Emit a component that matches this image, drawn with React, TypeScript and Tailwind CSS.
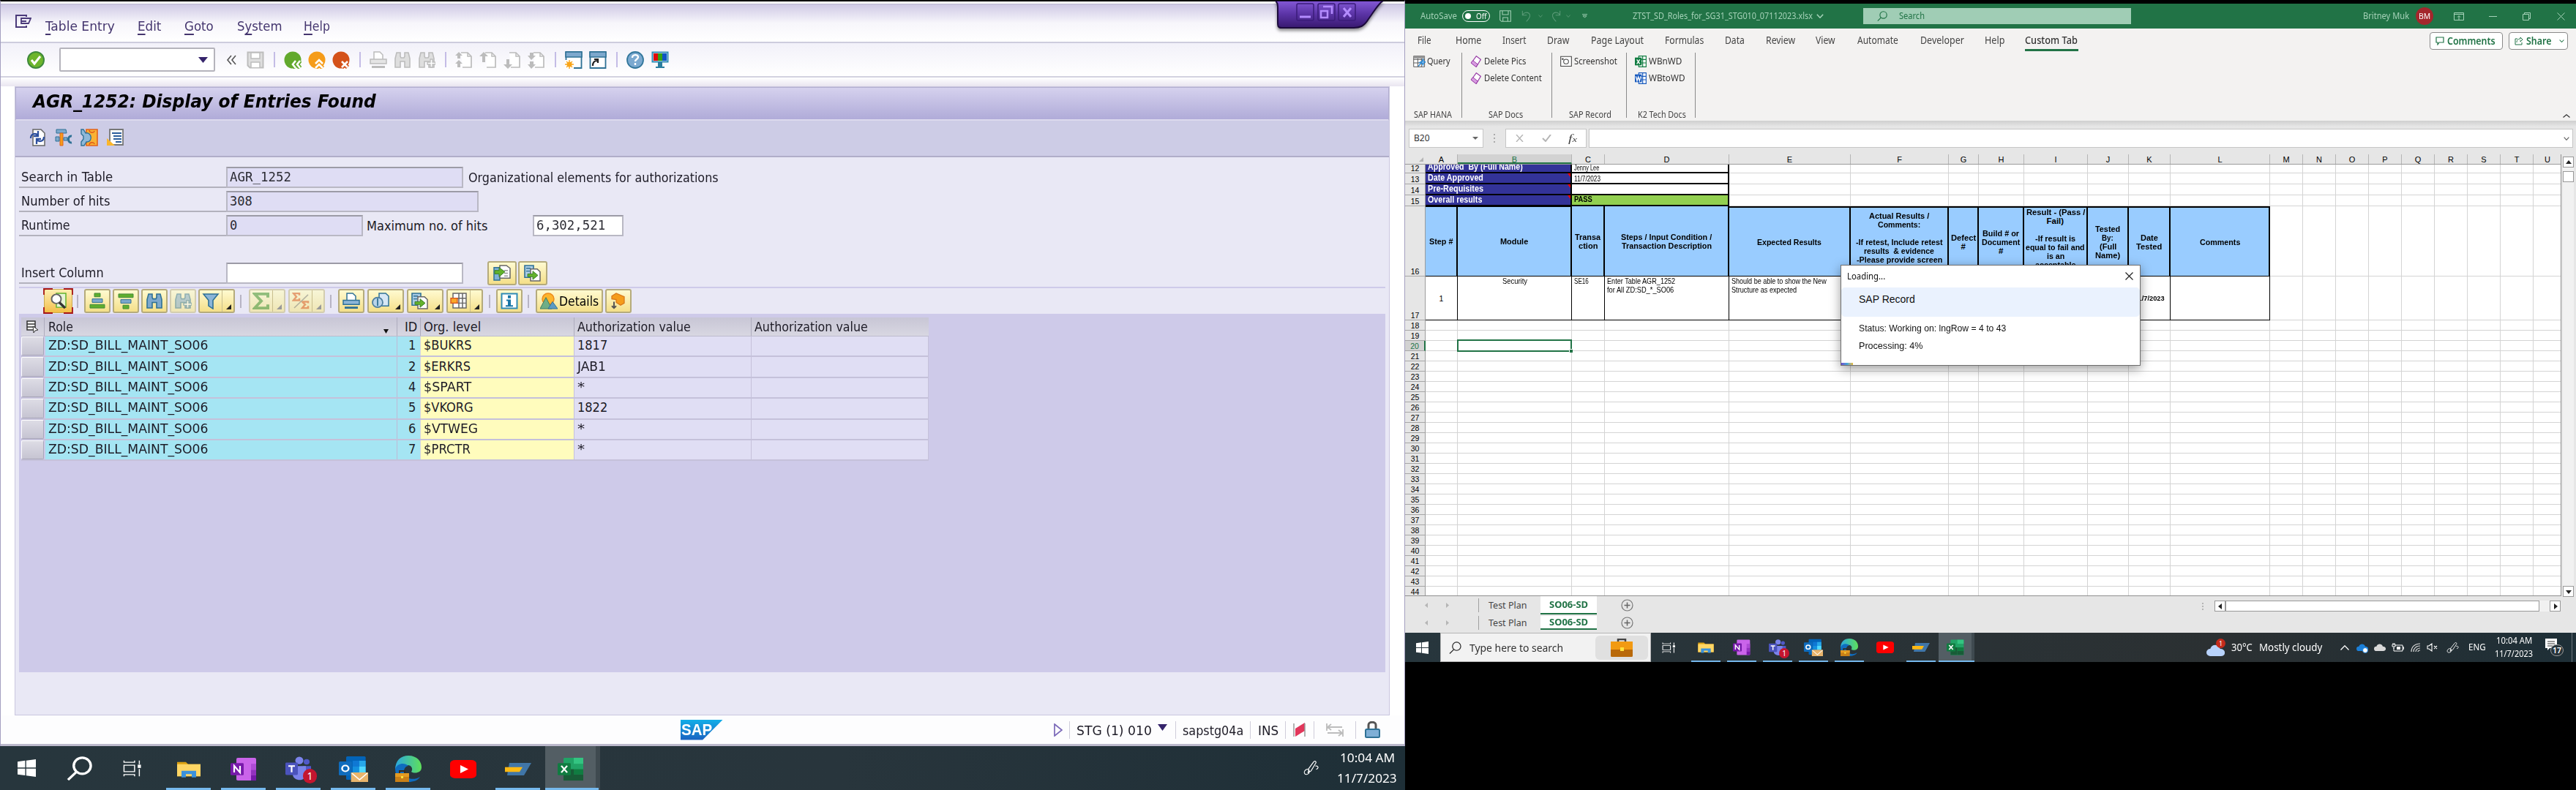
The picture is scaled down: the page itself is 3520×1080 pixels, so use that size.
import React, { useLayoutEffect, useRef } from "react";

/* Text fitted horizontally to the width of its own box. */
function T({ className = "", children }: { className?: string; children: React.ReactNode }) {
  const outer = useRef<HTMLSpanElement>(null);
  const inner = useRef<HTMLSpanElement>(null);
  useLayoutEffect(() => {
    const fit = () => {
      if (!outer.current || !inner.current) return;
      const natural = inner.current.offsetWidth;
      if (natural) inner.current.style.transform = `scaleX(${outer.current.offsetWidth / natural})`;
    };
    fit();
    document.fonts?.ready.then(fit);
  }, []);
  return (
    <span ref={outer} className={"block shrink-0 whitespace-pre " + className}>
      <span ref={inner} className="inline-block origin-left">{children}</span>
    </span>
  );
}

type IP = { className?: string };
const U = ({ children }: { children: React.ReactNode }) => <span className="underline underline-offset-4 decoration-[1.5px]">{children}</span>;

/* ---------- SAP toolbar icons ---------- */
const S = ({ className = "", children, vb = "0 0 24 24" }: IP & { children: React.ReactNode; vb?: string }) => (
  <svg viewBox={vb} preserveAspectRatio="none" fill="none" className={"block shrink-0 " + className}>{children}</svg>
);
const Sep = () => <div className="mx-[12.5px] h-[21px] w-[2px] shrink-0 bg-[#c4bce6]" />;
const I6 = "h-6 w-6";
const Ok = () => <S className={I6}><circle cx="12" cy="12" r="11" fill="#6db52c" stroke="#3f8a3c" strokeWidth="2" /><path d="M6 12l4 5 8-10" stroke="#fff" strokeWidth="3" /></S>;
const Save = () => <S className={I6}><path d="M1.500 1.500h21v21h-18l-3-3z" stroke="#bdbdbd" strokeWidth="2" fill="#dedede" /><path d="M6 2h12v8H6z" fill="#fff" stroke="#bdbdbd" strokeWidth="1.500" /><path d="M6 22v-7h12v7" fill="#fff" stroke="#bdbdbd" strokeWidth="1.500" /></S>;
const Round = ({ fill, d }: { fill: string; d: string }) => (
  <S className={I6}><circle cx="12" cy="12" r="11.500" fill={fill} /><path d={d} stroke={fill} strokeWidth="6" /><path d={d} stroke="#fff" strokeWidth="2.600" /></S>
);
const G = "#bcbcbc";
const Printer = ({ c = G, f = "#e4e4e4", className = I6 }: IP & { c?: string; f?: string }) => (
  <S className={className}><path d="M6 11V1h8l4 4v6" fill="#fff" stroke={c} strokeWidth="1.500" /><path d="M1 11h22v6H1z" fill={f} stroke={c} strokeWidth="1.500" /><path d="M3 20h18v3H3z" fill={c} /></S>
);
const Bino = ({ c = G, f = "#dedede", plus = false, className = I6 }: IP & { c?: string; f?: string; plus?: boolean }) => (
  <S className={className}><path d="M4 2h5v5l1 2h4l1-2V2h5l2 8v12h-7v-8h-6v8H2V10z" fill={f} stroke={c} strokeWidth="1.600" />{plus && <path d="M17 11h3v4h4v3h-4v4h-3v-4h-4v-3h4z" fill="#fff" stroke={c} strokeWidth="1.300" />}</S>
);
const Page = ({ d }: { d: string }) => (
  <S className={I6}><path d="M8 2h9l5 5v15H10" stroke={G} strokeWidth="1.700" fill="#fff" /><path d="M17 2v5h5" stroke={G} strokeWidth="1.500" /><path d={d} fill={G} /></S>
);
const WinIcon = ({ kind }: { kind: number }) => (
  <S className={I6}><path d="M1.500 1h21v22h-21z" fill="#fff" stroke="#2f7195" strokeWidth="1.800" /><path d="M1 1h22v7H1z" fill="#7da8cd" stroke="#2f7195" strokeWidth="1.600" />
    {kind === 0 ? <><path d="M0 12h12v12H0z" fill="#fff" /><circle cx="6" cy="18" r="3.500" fill="#f9a51a" /><path d="M6 12v12M0 18h12M2 14l8 8M10 14l-8 8" stroke="#f9a51a" strokeWidth="1.400" /></> : <path d="M5 20c0-5 2-7 6-7M7 11h5v5" stroke="#222" strokeWidth="2.200" />}</S>
);
const Help = () => <S className={I6}><circle cx="12" cy="12" r="11" fill="#7ba9d0" stroke="#33779c" strokeWidth="1.800" /><path d="M8 9c0-5 8-5 8-1 0 3-4 3-4 6M12 16v3" stroke="#fff" strokeWidth="2.400" /></S>;
const Monitor = () => <S className={I6}><path d="M1.500 1.500h21v13h-21z" fill="#fff" stroke="#2f8bb5" strokeWidth="2" /><path d="M3 3h6v10H3z" fill="#e10a0a" /><path d="M9 3h6v10H9z" fill="#35a412" /><path d="M15 3h6v10h-6z" fill="#1054c4" /><path d="M9 15h6v6h3v2H6v-2h3z" fill="#2b7d9f" /></S>;

/* ---------- yellow ALV buttons ---------- */
function YB({ className = "", children, dim = false, corner = false, split = false }: IP & { children?: React.ReactNode; dim?: boolean; corner?: boolean; split?: boolean }) {
  return (
    <div className={"relative flex h-[33px] shrink-0 items-center rounded-[3px] border-2 bg-gradient-to-b " + (dim ? "border-[#d3cdb0] from-[#f7f5d6] to-[#efe6b4] " : "border-[#b5ab7c] from-[#fffad0] to-[#f4df88] ") + className}>
      <div className={dim ? "flex flex-1 items-center justify-center opacity-50" : "flex flex-1 items-center justify-center"}>{children}</div>
      {split && <div className="h-full w-px shrink-0 bg-[#c9bf8e]" />}
      {(corner || split) && (
        <div className="flex h-full w-[15px] shrink-0 items-end justify-end p-[3px]">
          <svg viewBox="0 0 8 8" className="h-[7px] w-[7px]"><path d="M8 0v8H0z" fill={dim ? "#999" : "#222"} /></svg>
        </div>
      )}
    </div>
  );
}
const YSep = ({ className = "" }: IP) => <div className={"h-[18px] w-[2px] shrink-0 bg-[#b7b4c4] " + className} />;
const B6 = "h-[23px] w-[24px]";
const Bars = ({ up }: { up: boolean }) => (
  <S className={B6}>{up
    ? <><path d="M8 1h8v5H8z" fill="#5fae2c" stroke="#3f8a3c" /><path d="M5 9h14v5H5z" fill="#7da8cd" stroke="#2f7195" /><path d="M2 17h20v5H2z" fill="#5fae2c" stroke="#3f8a3c" /></>
    : <><path d="M2 2h20v5H2z" fill="#5fae2c" stroke="#3f8a3c" /><path d="M5 10h14v5H5z" fill="#7da8cd" stroke="#2f7195" /><path d="M8 18h8v5H8z" fill="#5fae2c" stroke="#3f8a3c" /></>}</S>
);
const Arrow = ({ flip = false }: { flip?: boolean }) => (
  <S className={B6}>{flip
    ? <><path d="M1 1h12v17H1z" fill="#a9cbe4" stroke="#2f7195" strokeWidth="1.600" /><path d="M3 5h6M3 9h5" stroke="#2f7195" strokeWidth="1.500" /><path d="M9 6h9l4 4v13H9z" fill="#fff" stroke="#666" strokeWidth="1.500" /><path d="M5 13h7V9l7 6-7 6v-4H5z" fill="#63b22b" stroke="#3c7f2c" /></>
    : <><path d="M1 4h8v18H1z" fill="#7fb2d6" stroke="#2f7195" strokeWidth="1.500" /><path d="M9 1h9l5 4v14H9z" fill="#fff" stroke="#666" strokeWidth="1.500" /><path d="M15 8h5M15 12h5M15 16h5" stroke="#999" strokeWidth="1.500" /><path d="M2 8h6V4l8 6-8 7v-4H2z" fill="#63b22b" stroke="#3c7f2c" /></>}</S>
);

/* ---------- Windows taskbar icons ---------- */
const V = ({ className = "", children }: IP & { children: React.ReactNode }) => <S vb="0 0 36 36" className={className}>{children}</S>;
const Win = ({ className }: IP) => <V className={className}><path d="M0 5l15-2.200V17H0zM17 2.500L36 0v17H17zM0 19h15v14L0 31zM17 19h19v17l-19-2.600z" fill="#fff" /></V>;
const Mag = ({ className, c = "#fff", w = 3.500 }: IP & { c?: string; w?: number }) => <V className={className}><circle cx="22" cy="14" r="12" stroke={c} strokeWidth={w} /><path d="M14 23L2 35" stroke={c} strokeWidth={w} /></V>;
const TaskView = ({ className }: IP) => <V className={className}><path d="M2 1v4h20V1M2 11h20v14H2zM2 35v-4h20v4M31 1v8M31 19v16" stroke="#fff" strokeWidth="2" /><path d="M28 10h6v7h-6z" fill="#fff" /></V>;
const Folder = ({ className }: IP) => <V className={className}><path d="M2 5h12l3 4h17v22H2z" fill="#dda211" /><path d="M2 9h32v22H2z" fill="#ffd664" /><path d="M8 33V21h20v12h-6v-6h-8v6z" fill="#3b92dc" /></V>;
const OneNote = ({ className }: IP) => <V className={className}><rect x="8" y="1" width="27" height="34" rx="2" fill="#ca64ea" /><path d="M28 10h7v9h-7z" fill="#ae4bd5" /><path d="M28 19h7v8h-7z" fill="#9332bf" /><path d="M28 27h7v8h-7z" fill="#7719aa" /><rect y="9" width="18" height="18" rx="1.500" fill="#7719aa" /><path d="M5 23V13l8 10V13" stroke="#fff" strokeWidth="2.200" /></V>;
const Teams = ({ className }: IP) => <V className={className}><circle cx="19" cy="6" r="5.500" fill="#7b83eb" /><circle cx="29" cy="8" r="4" fill="#5059c9" /><path d="M24 14h11v10c0 6-8 7-11 3z" fill="#5059c9" /><path d="M10 14h18v12c0 12-18 10-18 0z" fill="#7b83eb" /><rect y="9" width="17" height="18" rx="1.500" fill="#4b53bc" /><path d="M4 14h9M8.500 14v9" stroke="#fff" strokeWidth="2.200" /></V>;
const Outlook = ({ className }: IP) => <V className={className}><rect x="9" y="1" width="24" height="32" rx="1.500" fill="#0364b8" /><path d="M17 7h8v8h-8z" fill="#0f78d4" /><path d="M25 7h8v8h-8z" fill="#28a8ea" /><path d="M17 15h8v8h-8z" fill="#1490df" /><path d="M25 15h8v8h-8z" fill="#50d9ff" /><rect y="8" width="16" height="19" rx="1.500" fill="#0f6cbd" /><circle cx="8" cy="17.500" r="4" stroke="#fff" strokeWidth="2.200" /><path d="M15 23h21v13H15z" fill="#e8b46c" /><path d="M16 24l9.500 9L35 24" stroke="#fff" strokeWidth="1.500" /></V>;
const Edge = ({ className }: IP) => (
  <V className={className}>
    <defs><linearGradient id="eg" x1="0" x2="1"><stop stopColor="#2aa7e0" /><stop offset="1" stopColor="#5fe05a" /></linearGradient></defs>
    <path d="M0 20C0 6 8 0 18 0c12 0 18 8 18 16 0 8-10 9-14 6 3-4 0-9-5-9C9 13 0 16 0 20z" fill="url(#eg)" />
    <path d="M0 18c3-8 13-9 18-4-6 1-7 7-5 12 3 6 13 8 21 3-3 5-9 7-16 7C7 36 0 28 0 18z" fill="#0f6cbf" />
    <path d="M0 24h19v12H0z" fill="#c87f17" /><path d="M0 24h19v5H0z" fill="#e39a22" /><path d="M6 24v-3h7v3" stroke="#3a2a18" strokeWidth="2" /><path d="M8 28h3v3H8z" fill="#ffe13b" />
  </V>
);
const YouTube = ({ className }: IP) => <V className={className}><rect y="0" width="36" height="36" rx="7" fill="#f00" /><path d="M14 10l11 8-11 8z" fill="#fff" /></V>;
const SapGui = ({ className }: IP) => <V className={className}><path d="M6 0h30L26 36H3z" fill="#4076a8" /><path d="M0 12h24l-4 14H0z" fill="#fdb913" /></V>;
const Excel = ({ className }: IP) => <V className={className}><rect x="8" y="1" width="27" height="34" rx="1.500" fill="#21a366" /><path d="M22 1h13v9H22z" fill="#33c481" /><path d="M8 18h14v17H8z" fill="#185c37" /><path d="M22 18h13v8H22z" fill="#107c41" /><path d="M22 26h13v9H22z" fill="#185c37" /><rect y="9" width="18" height="18" rx="1.500" fill="#107c41" /><path d="M5 13l8 10M13 13L5 23" stroke="#fff" strokeWidth="2.300" /></V>;
const Pen = ({ className }: IP) => <V className={className}><path d="M14 30C4 40-2 28 6 22c5-3 8 0 8 4 0 3-3 4-4 2M12 20L24 3c2-4 7-1 5 3L18 25l-6 4zM28 13c7-1 9 5 2 8" stroke="#fff" strokeWidth="2" /></V>;

const icons = [Folder, OneNote, Teams, Outlook, Edge, YouTube, SapGui, Excel];

/* ---------- SAP window ---------- */
const tableRows: [string, string, string][] = [
  ["1", "$BUKRS", "1817"], ["2", "$ERKRS", "JAB1"], ["4", "$SPART", "*"],
  ["5", "$VKORG", "1822"], ["6", "$VTWEG", "*"], ["7", "$PRCTR", "*"],
];
const orgW = ["w-[65px]", "w-[64px]", "w-[65px]", "w-[68px]", "w-[74px]", "w-[64px]"];
const valW = ["w-[41px]", "w-[39px]", "w-[10px]", "w-[41px]", "w-[10px]", "w-[10px]"];

const Field = ({ className = "", children, white = false }: IP & { children?: React.ReactNode; white?: boolean }) => (
  <div className={"flex h-[29px] shrink-0 items-center border-2 border-[#b9b8c4] border-t-[#9c9ba6] pl-[3px] font-['DejaVu_Sans_Mono',monospace] text-[17px] leading-none text-[#2b2b33] " + (white ? "bg-white " : "bg-[#dfddf4] ") + className}>{children}</div>
);
const Label = ({ children }: { children: React.ReactNode }) => <div className="flex h-[29px] w-[283px] shrink-0 items-center border-b-2 border-[#b3b2bd] pl-[3px]">{children}</div>;

function SapWindow() {
  return (
    <div className="relative flex h-[1020px] w-[1920px] flex-col border-x border-t-2 border-x-[#a49fc0] border-t-black bg-white font-['DejaVu_Sans_Condensed','DejaVu_Sans',sans-serif] text-[18px] leading-[20px] text-[#1d1b26]">
      {/* menu */}
      <div className="mt-[3px] flex h-[52px] items-center border-t border-[#bcb8d0] bg-gradient-to-b from-[#cfc9e5] via-[#f7f6fb] to-white pl-5 text-[#44356e]">
        <S className="-mt-[6px] h-[18px] w-[22px]" vb="0 0 22 18"><path d="M15 3V1H1v16h14v-2" stroke="#4b3a7a" strokeWidth="2" /><path d="M8 5h13l-3 7H8zM8 9h7" stroke="#4b3a7a" strokeWidth="1.800" /></S>
        <T className="ml-[19px] w-[95px] pt-2"><U>T</U>able Entry</T>
        <T className="ml-[31px] w-[32px] pt-2"><U>E</U>dit</T>
        <T className="ml-[32px] w-[40px] pt-2"><U>G</U>oto</T>
        <T className="ml-[32px] w-[61px] pt-2">S<U>y</U>stem</T>
        <T className="ml-[30px] w-[36px] pt-2"><U>H</U>elp</T>
      </div>
      {/* standard toolbar */}
      <div className="flex h-[47px] items-center border-t-2 border-[#cdccdd] bg-gradient-to-b from-[#f2f1f9] to-white pl-9">
        <Ok />
        <div className="ml-5 flex h-[33px] w-[213px] shrink-0 items-center justify-end rounded-[2px] border-2 border-[#b5b4bc] bg-white pr-2">
          <S className="h-2 w-[13px]" vb="0 0 12 8"><path d="M0 0h12L6 8z" fill="#35246b" /></S>
        </div>
        <S className="ml-[15px] h-[14px] w-[14px]" vb="0 0 14 14"><path d="M7 1L2 7l5 6M13 1L8 7l5 6" stroke="#555" strokeWidth="1.600" /></S>
        <div className="w-[14px] shrink-0" />
        <Save /><Sep />
        <div className="flex gap-[9px]">
          <Round fill="#62a92d" d="M16 13l-4 5 4 5M22 13l-4 5 4 5" />
          <Round fill="#f59c1a" d="M10 17l5-5 5 5M10 23l5-5 5 5" />
          <Round fill="#d4521a" d="M13 14l8 8M21 14l-8 8" />
        </div><Sep />
        <div className="flex gap-[9px]"><Printer /><Bino /><Bino plus /></div><Sep />
        <div className="flex gap-[9px]">
          <Page d="M5 1l5 5H7v4H3V6H0zM5 12l5 5H7v5H3v-5H0z" />
          <Page d="M6 1l6 6H8v8H4V7H0z" />
          <Page d="M6 24l6-6H8v-7H4v7H0z" />
          <Page d="M5 24l6-6H8v-4H3v4H0zM5 12l6-6H8V2H3v4H0z" />
        </div><Sep />
        <div className="flex gap-[9px]"><WinIcon kind={0} /><WinIcon kind={1} /></div><Sep />
        <div className="flex gap-[10px]"><Help /><Monitor /></div>
      </div>
      <div className="h-[14px] shrink-0 border-t-2 border-[#d3d2e0] bg-gradient-to-b from-white to-[#e9e5f0]" />
      {/* content panel */}
      <div className="ml-[19px] mr-[20px] flex h-[860px] flex-col border border-[#c9c6de] bg-[#e9e8f5]">
        <div className="flex h-[46px] shrink-0 items-center border border-b-2 border-[#b2aed0] border-b-[#dcd9ee] bg-gradient-to-b from-[#d5d1ee] to-[#b0abd8] pl-[23px] text-[24px] font-bold italic leading-[30px] text-black">
          <T className="-mt-[5px] w-[469px]">AGR_1252: Display of Entries Found</T>
        </div>
        <div className="flex h-[50px] shrink-0 items-center border-b-2 border-[#b0adc9] bg-[#cdcce6] pl-[18px]">
          <S className="-mt-[2px] h-6 w-6"><path d="M6 1h11l5 5v17H6z" fill="#fff" stroke="#666" strokeWidth="1.500" /><path d="M3 13c0-6 6-8 10-4M13 3v7H7M21 11c0 6-6 8-10 4M11 21v-7h6" stroke="#2c4f9e" strokeWidth="2.300" /></S>
          <S className="-mt-[2px] ml-3 h-6 w-6"><path d="M2 1h13l1 5H2z" fill="#7da8cd" stroke="#2f7195" /><path d="M7 6h4v17H7z" fill="#f59c1a" stroke="#e2621b" /><path d="M1 11h5v6H1zM12 12h5v4h-5z" fill="#7da8cd" stroke="#2f7195" /><path d="M23 10c-6-1-6 10 0 9" stroke="#2f7195" strokeWidth="3" /></S>
          <S className="-mt-[2px] ml-[11px] h-6 w-6"><path d="M8 1h15v22H8z" fill="#f9b233" stroke="#e2621b" strokeWidth="1.600" /><path d="M1 1h3l3 5c9-2 10 13 1 12l-3 5H1v-5l3-4v-4L1 7z" fill="#8fb8d8" stroke="#2f7195" strokeWidth="1.400" /><path d="M12 2c0 4 7 4 7 1M12 22c0-4 7-4 7-1" stroke="#e2621b" strokeWidth="1.600" /></S>
          <S className="-mt-[2px] ml-3 h-6 w-6"><path d="M4 1h18v21H4z" fill="#fff" stroke="#777" strokeWidth="1.800" /><path d="M7 6h13M9 10h11M9 14h11M12 18h8" stroke="#2b5d9c" strokeWidth="1.800" /><path d="M0 13l11 10H0z" fill="#fbb62b" /></S>
        </div>
        <div className="flex flex-col gap-1 pl-[5px] pt-[13px]">
          <div className="flex items-center"><Label><T className="w-[125px]">Search in Table</T></Label><Field className="w-[324px]"><T className="w-[84px]">AGR_1252</T></Field><T className="ml-[7px] w-[342px]">Organizational elements for authorizations</T></div>
          <div className="flex items-center"><Label><T className="w-[122px]">Number of hits</T></Label><Field className="w-[345px]"><T className="w-[31px]">308</T></Field></div>
          <div className="flex items-center"><Label><T className="w-[67px]">Runtime</T></Label><Field className="w-[187px]"><T className="w-[10px]">0</T></Field><T className="ml-[5px] w-[165px]">Maximum no. of hits</T><Field white className="ml-[62px] w-[124px]"><T className="w-[94px]">6,302,521</T></Field></div>
        </div>
        <div className="mt-[34px] flex h-[33px] items-center pl-[5px]">
          <Label><T className="w-[113px]">Insert Column</T></Label><Field white className="w-[324px]" />
          <YB className="ml-[33px] w-[40px]"><Arrow /></YB><YB className="ml-[2px] w-[40px]"><Arrow flip /></YB>
        </div>
        {/* result grid */}
        <div className="mx-[5px] mt-[2px] flex h-[527px] shrink-0 flex-col bg-[#cecae9]">
          <div className="mt-[2px] flex h-[35px] shrink-0 items-center bg-[#e9e8f5] pl-[34px]">
            <div className="relative flex h-[33px] w-[39px] shrink-0 items-center justify-center rounded-[3px] border border-[#c9a94c] bg-gradient-to-b from-[#fdeeb0] to-[#f3bf45]">
              <S className={B6}><path d="M9 1h13v20H9z" fill="#e7f3d5" stroke="#63b22b" strokeWidth="1.500" /><circle cx="9" cy="9" r="6.500" fill="#fff" stroke="#666" strokeWidth="2" /><path d="M13 14l8 8" stroke="#333" strokeWidth="3.500" /></S>
              <svg viewBox="0 0 41 35" className="absolute -left-[2px] -top-[2px] h-[35px] w-[41px]"><path d="M1 9V1h12M28 1h12v8M1 26v8h12M28 34h12v-8" fill="none" stroke="#a81616" strokeWidth="1.800" /></svg>
            </div>
            <YSep className="ml-[6px]" />
            <YB className="ml-[8px] w-[36px]"><Bars up /></YB>
            <YB className="ml-[3px] w-[36px]"><Bars up={false} /></YB>
            <YB className="ml-[3px] w-[36px]"><Bino c="#2f7195" f="#7da8cd" className={B6} /></YB>
            <YB dim className="ml-[3px] w-[36px]"><Bino c="#2f7195" f="#7da8cd" plus className={B6} /></YB>
            <YB split className="ml-[3px] w-[50px]"><S className={B6}><path d="M2 2h20l-7 9v12l-6-4v-8z" fill="#8bb5d8" stroke="#2f7195" strokeWidth="1.600" /></S></YB>
            <YSep className="ml-[7px]" />
            <YB dim split className="ml-[10px] w-[50px]"><S className={B6}><path d="M21 7V2H3l9 10-9 10h18v-5" stroke="#2f8a2a" strokeWidth="4" /></S></YB>
            <YB dim split className="ml-[4px] w-[50px]"><S className={B6}><path d="M10 4V1H2l4 5-4 5h8V8M22 15v-2h-8l4 4-4 5h8v-3" stroke="#d8501a" strokeWidth="2.500" /><path d="M22 3L3 22" stroke="#777" strokeWidth="1.500" /></S></YB>
            <YSep className="ml-[7px]" />
            <YB className="ml-[9px] w-[36px]"><Printer c="#2f7195" f="#8bb5d8" className={B6} /></YB>
            <YB corner className="ml-[4px] w-[50px]"><S className={B6}><path d="M10 1h9l4 4v14H10z" fill="#d7e7f5" stroke="#2f7195" strokeWidth="1.500" /><circle cx="8" cy="14" r="7" fill="#b9d4ea" stroke="#4f7f9f" strokeWidth="1.800" /><path d="M8 8v11" stroke="#2f7195" strokeWidth="1.800" /></S></YB>
            <YB corner className="ml-[4px] w-[50px]"><Arrow flip /></YB>
            <YB split className="ml-[4px] w-[50px]"><S className={B6}><path d="M4 1h18v21H4zM4 8h18M4 15h18M12 1v21M17 1v21" fill="#fff" stroke="#666" strokeWidth="1.500" /><path d="M1 8h9v7H1z" fill="#f9a82a" stroke="#d8501a" strokeWidth="1.300" /></S></YB>
            <YSep className="ml-[8px]" />
            <YB className="ml-[8px] w-[36px]"><S className={B6}><path d="M1.500 1.500h21v21h-21z" fill="#fff" stroke="#2f8bb5" strokeWidth="2" /><path d="M10 4h4v4h-4zM8 10h6v8h3v2H7v-2h3v-6H8z" fill="#1976a6" /></S></YB>
            <YSep className="ml-[7px]" />
            <YB className="ml-[9px] w-[92px]"><S className={B6}><circle cx="11" cy="9" r="8" fill="#fdb52c" stroke="#ec8a1c" strokeWidth="1.500" /><path d="M0 23L8 7l8 16z" fill="#6fae86" stroke="#3c7b60" /><path d="M11 23l6-10 7 10z" fill="#5b9ac4" stroke="#2f7195" /></S><T className="ml-[2px] w-[54px] text-black">Details</T></YB>
            <YB className="ml-[3px] w-[36px]"><S className={B6}><path d="M3 5l6-4 11 5v9l-5 3-6-4v-4l-6-1z" fill="#f59c1a" stroke="#d8781a" strokeWidth="1.300" /><path d="M6 13v9M3 19l3 3 3-3" stroke="#555" strokeWidth="2" /></S></YB>
          </div>
          <div className="ml-[3px] mt-[5px] flex h-[26px] w-[1240px] shrink-0 items-center border-b border-[#bdbbcd] bg-gradient-to-b from-[#c8c6d5] to-[#d8d7e2]">
            <div className="flex h-full w-[32px] shrink-0 items-center justify-center border-r border-[#aeacbd]"><S className="h-[18px] w-[18px]" vb="0 0 18 18"><path d="M1 1h11v12H1zM1 5h11M1 9h11" stroke="#333" strokeWidth="1.500" fill="#fff" /><path d="M9 8l7 5-4 1-2 3z" fill="#fff" stroke="#333" /></S></div>
            <div className="flex h-full w-[482px] shrink-0 items-center justify-between border-r border-[#aeacbd] pl-[5px] pr-[11px]"><T className="w-[34px]">Role</T><S className="mt-3 h-[6px] w-[7px]" vb="0 0 8 6"><path d="M0 0h8L4 6z" fill="#111" /></S></div>
            <div className="flex h-full w-[32px] shrink-0 items-center justify-end border-r border-[#aeacbd] pr-[4px]"><T className="w-[17px]">ID</T></div>
            <div className="flex h-full w-[210px] shrink-0 items-center border-r border-[#aeacbd] pl-[4px]"><T className="w-[78px]">Org. level</T></div>
            <div className="flex h-full w-[242px] shrink-0 items-center border-r border-[#aeacbd] pl-[4px]"><T className="w-[155px]">Authorization value</T></div>
            <div className="flex h-full flex-1 items-center pl-[4px]"><T className="w-[155px]">Authorization value</T></div>
          </div>
          {tableRows.map((r, i) => (
            <div key={r[0]} className="ml-[3px] flex h-[28.4px] w-[1240px] shrink-0 border-b-2 border-[#c5c1da]">
              <div className="mr-[2px] w-[31px] shrink-0 rounded-[2px] border border-[#a9a7b9] border-l-white border-t-white bg-gradient-to-b from-[#dddce5] to-[#c6c4d2]" />
              <div className="flex w-[481px] shrink-0 items-center border-r border-[#bdbad6] bg-[#a5e5f3] pb-[2px] pl-[4px]"><T className="w-[218px]">ZD:SD_BILL_MAINT_SO06</T></div>
              <div className="flex w-[32px] shrink-0 items-center justify-end border-r border-[#d6d4e4] bg-[#a5e5f3] pb-[2px] pr-[6px]"><T className="w-[10px]">{r[0]}</T></div>
              <div className="flex w-[210px] shrink-0 items-center border-r border-[#c5c1da] bg-[#fffcbd] pb-[2px] pl-[4px]"><T className={orgW[i]}>{r[1]}</T></div>
              <div className="flex w-[242px] shrink-0 items-center border-r border-[#c5c1da] bg-[#e0def4] pb-[2px] pl-[4px]"><T className={valW[i]}>{r[2]}</T></div>
              <div className="flex-1 border-r border-[#c5c1da] bg-[#e0def4]" />
            </div>
          ))}
        </div>
      </div>
      {/* status bar */}
      <div className="flex h-[42px] shrink-0 items-center border-b-[3px] border-[#bcb9cc] bg-[#fdfdfe] pl-[929px]">
        <div className="flex h-[28px] w-[58px] shrink-0 items-center bg-gradient-to-b from-[#12aee8] to-[#1b62c0] pl-px font-['Liberation_Sans',sans-serif] text-[22px] font-bold text-white [clip-path:polygon(0_0,100%_0,52%_100%,0_100%)]"><T className="w-[42px]">SAP</T></div>
        <S className="ml-[452px] h-[18px] w-[12px]" vb="0 0 12 18"><path d="M1 1l10 8-10 8z" stroke="#7a68b8" strokeWidth="1.700" /></S>
        <div className="ml-[9px] h-[24px] w-px bg-[#cfcdda]" />
        <T className="ml-[9px] mt-[3px] w-[103px]">STG (1) 010</T>
        <S className="-mt-[6px] ml-[8px] h-[9px] w-[13px]" vb="0 0 12 8"><path d="M0 0h12L6 8z" fill="#35246b" /></S>
        <div className="ml-[11px] h-[24px] w-px bg-[#cfcdda]" />
        <T className="ml-[9px] mt-[3px] w-[83px]">sapstg04a</T>
        <div className="ml-[9px] h-[24px] w-px bg-[#cfcdda]" />
        <T className="ml-[10px] mt-[3px] w-[28px]">INS</T>
        <div className="ml-[9px] h-[24px] w-px bg-[#cfcdda]" />
        <S className="ml-[10px] h-[20px] w-[17px]" vb="0 0 17 20"><path d="M3 8L16 0v11L3 19z" fill="#e2365a" /><path d="M1 1v18M16 1v18" stroke="#999" strokeWidth="1.500" /></S>
        <div className="ml-[11px] h-[24px] w-px bg-[#cfcdda]" />
        <S className="ml-[16px] h-[18px] w-[24px]" vb="0 0 24 18"><path d="M1 0v10M2 5h20M7 1L2 5l5 4M23 8v10M2 13h20M17 9l5 4-5 4" stroke="#bdbdbd" strokeWidth="1.800" /></S>
        <div className="ml-[16px] h-[24px] w-px bg-[#cfcdda]" />
        <S className="ml-[12px] h-[23px] w-[21px]" vb="0 0 21 23"><path d="M5 10V5c0-5 10-5 10 0v5" stroke="#555" strokeWidth="3" /><rect x="1" y="11" width="19" height="11" rx="1.500" fill="#7fafd6" stroke="#2f7195" strokeWidth="2" /></S>
      </div>
      {/* floating window controls */}
      <svg viewBox="0 0 150 44" className="absolute -top-px left-[1741px] h-[44px] w-[150px] drop-shadow-[0_3px_2px_rgba(0,0,0,0.45)]">
        <defs><linearGradient id="wc" x2="0" y2="1"><stop stopColor="#8459d6" /><stop offset=".5" stopColor="#5a33a5" /><stop offset="1" stopColor="#38196f" /></linearGradient></defs>
        <path d="M1 0h147c-6 3-12 14-20 25-6 10-12 12-20 12H9c-5 0-5-3-5-7V8C4 4 3 2 1 0z" fill="url(#wc)" stroke="#1c0a3c" strokeWidth="2" />
        <g fill="none" stroke="#3b1c7a" strokeWidth="1.500"><rect x="30" y="4" width="23" height="23" rx="2" /><rect x="59" y="4" width="23" height="23" rx="2" /><rect x="87" y="4" width="23" height="23" rx="2" /></g>
        <g fill="none" stroke="#b48cff"><path d="M34 22h15" strokeWidth="3" /><path d="M66 8h12v10M63 14h9v9h-9z" strokeWidth="2.500" /><path d="M94 10l10 12M104 10L94 22" strokeWidth="3" /></g>
      </svg>
    </div>
  );
}

const leftSize = ["h-[27px] w-[36px]", "h-[33px] w-[36px]", "h-[34px] w-[36px]", "h-[36px] w-[40px]", "h-[36px] w-[36px]", "h-[25px] w-[36px]", "h-[17px] w-[36px]", "h-[33px] w-[36px]"];

function LeftTaskbar() {
  return (
    <div className="flex h-[60px] w-[1920px] items-center bg-gradient-to-r from-[#27363d] via-[#28353c] via-60% to-[#1e2f37] font-['Noto_Sans',sans-serif] text-white">
      <Win className="ml-[24px] h-[24px] w-[25px]" />
      <Mag className="ml-[42px] h-[33px] w-[35px]" />
      <TaskView className="ml-[42px] h-[23px] w-[26px]" />
      <div className="ml-[26px] flex h-full">
        {icons.map((Ic, i) => (
          <div key={i} className={"relative flex h-full w-[75px] flex-col items-center " + (i === 7 ? "border-r-[6px] border-[#3f4a50] bg-[#535e64]" : "")}>
            <div className="flex flex-1 items-center justify-center pt-[2px]"><Ic className={leftSize[i]} /></div>
            {i !== 5 && <div className={"absolute bottom-0 h-[3px] bg-[#76b9ed] " + (i === 7 ? "left-0 w-[73px]" : "w-[61px]")} />}
            {i === 2 && <div className="absolute left-[44px] top-[31px] flex h-5 w-[19px] items-center justify-center rounded-full bg-[#c4162f] text-[14px] leading-none">1</div>}
          </div>
        ))}
      </div>
      <Pen className="ml-[961px] h-[20px] w-[21px]" />
      <div className="ml-auto mr-[11px] flex flex-col items-center text-[17px] leading-[28px]"><T className="w-[75px]">10:04 AM</T><T className="w-[82px]">11/7/2023</T></div>
    </div>
  );
}

/* ---------- Excel ---------- */
const Chev = ({ className = "", c = "#fff" }: IP & { c?: string }) => <S vb="0 0 12 8" className={className}><path d="M1 1l5 6 5-6" stroke={c} strokeWidth="1.800" /></S>;

const tabs: [string, string][] = [
  ["File", "ml-[17px] w-[19px]"], ["Home", "ml-[33px] w-[35px]"], ["Insert", "ml-[29px] w-[32px]"], ["Draw", "ml-[29px] w-[30px]"],
  ["Page Layout", "ml-[30px] w-[72px]"], ["Formulas", "ml-[29px] w-[53px]"], ["Data", "ml-[29px] w-[27px]"], ["Review", "ml-[29px] w-[40px]"],
  ["View", "ml-[28px] w-[27px]"], ["Automate", "ml-[30px] w-[56px]"], ["Developer", "ml-[30px] w-[60px]"], ["Help", "ml-[28px] w-[27px]"],
];
const Eraser = () => <S className="h-4 w-4"><path d="M14 1l9 7-9 15-10-8z" fill="#fff" stroke="#9a3fa8" strokeWidth="1.800" /><path d="M7 10l10 8-4 5-10-8z" fill="#d79be0" stroke="#9a3fa8" strokeWidth="1.500" /></S>;
const Doc = ({ c, d }: { c: string; d: string }) => <S className="h-4 w-4"><path d="M8 1h15v22H8zM8 8h15M8 15h15M16 1v22" fill="#fff" stroke={c} strokeWidth="1.700" /><path d="M0 4h14v16H0z" fill={c} /><path d={d} stroke="#fff" strokeWidth="2" /></S>;

function Group({ className, label, labelW, children }: { className: string; label: string; labelW: string; children: React.ReactNode }) {
  return (
    <div className={"flex h-[89px] shrink-0 flex-col justify-between border-r border-[#8a8a8a] text-[12px] leading-[16px] " + className}>
      <div className="flex flex-col gap-[7px] pt-[4px]">{children}</div>
      <div className="-mb-1 flex justify-center text-[#444]"><T className={labelW}>{label}</T></div>
    </div>
  );
}

const colW = ["w-[44px]", "w-[156px]", "w-[45px]", "w-[170px]", "w-[166px]", "w-[134px]", "w-[41px]", "w-[62px]", "w-[87px]", "w-[56px]", "w-[57px]", "w-[136px]", "w-[45px]", "w-[45px]", "w-[45px]", "w-[45px]", "w-[45px]", "w-[45px]", "w-[45px]", "w-[45px]", "w-[39px]"];
const letters = "ABCDEFGHIJKLMNOPQRSTU".split("");

const RowNo = ({ n, sel = false }: { n: number; sel?: boolean }) => (
  <div className={"flex w-[28px] shrink-0 items-end justify-center border-b border-r border-[#a6a6a6] text-[10.5px] leading-[12px] " + (sel ? "border-r-2 border-r-[#217346] bg-[#d2d2d2] text-[#217346]" : "border-r-[#9b9b9b] bg-[#e6e6e6]")}>{n}</div>
);
const Blank = ({ from = 0 }: { from?: number }) => <>{colW.slice(from).map((w, i) => <div key={i} className={"shrink-0 border-b border-r border-[#d4d4d4] " + w} />)}</>;

const heads: [string, string][][] = [
  [["Step #", "w-[33px]"]],
  [["Module", "w-[38px]"]],
  [["Transa", "w-[35px]"], ["ction", "w-[26px]"]],
  [["Steps / Input Condition /", "w-[124px]"], ["Transaction Description", "w-[123px]"]],
  [["Expected Results", "w-[88px]"]],
  [["Actual Results /", "w-[82px]"], ["Comments:", "w-[58px]"], ["", ""], ["-If retest, Include retest", "w-[119px]"], ["results  & evidence", "w-[96px]"], ["-Please provide screen", "w-[117px]"], ["shots in an attached", "w-[104px]"]],
  [["Defect", "w-[34px]"], ["#", "w-[6px]"]],
  [["Build # or", "w-[50px]"], ["Document", "w-[52px]"], ["#", "w-[6px]"]],
  [["Result - (Pass /", "w-[80px]"], ["Fail)", "w-[24px]"], ["", ""], ["-If result is", "w-[55px]"], ["equal to fail and", "w-[81px]"], ["is an", "w-[24px]"], ["acceptable", "w-[55px]"]],
  [["Tested", "w-[34px]"], ["By:", "w-[16px]"], ["(Full", "w-[23px]"], ["Name)", "w-[34px]"]],
  [["Date", "w-[24px]"], ["Tested", "w-[35px]"]],
  [["Comments", "w-[55px]"]],
];

const MetaRow = ({ n, label, lw, h, value, vw = "w-px", pass = false, clip = false }: { n: number; label: string; lw: string; h: string; value?: string; vw?: string; pass?: boolean; clip?: boolean }) => (
  <div className={"flex shrink-0 overflow-hidden " + h}>
    <RowNo n={n} />
    <div className="relative flex w-[200px] shrink-0 items-center border-b-2 border-r-2 border-black bg-[#333399] pl-[3px] text-[12px] font-bold leading-[13px] text-white">
      <T className={(clip ? "-mt-[3px] " : "") + lw}>{label}</T>
      {!clip && <div className="absolute right-0 top-0 h-[5px] w-[4px] bg-[#f00] [clip-path:polygon(0_0,100%_0,100%_100%)]" />}
    </div>
    <div className={"flex w-[215px] shrink-0 items-center border-b-2 border-r-2 border-black pl-[3px] text-[10.5px] leading-[12px] " + (pass ? "bg-[#92d050] font-bold" : "bg-white")}>{value && <T className={vw}>{value}</T>}</div>
    <Blank from={4} />
  </div>
);

const SheetTabs = ({ h }: { h: string }) => (
  <div className={"flex shrink-0 items-center pl-[27px] text-[12.5px] leading-[16px] " + h}>
    <S className="h-[7px] w-[4px]" vb="0 0 4 7"><path d="M4 0v7L0 3.500z" fill="#b5b5b5" /></S>
    <S className="ml-[25px] h-[7px] w-[4px]" vb="0 0 4 7"><path d="M0 0v7l4-3.500z" fill="#b5b5b5" /></S>
    <div className="ml-[40px] h-[19px] w-px bg-[#a0a0a0]" />
    <T className="ml-[13px] w-[52px] text-[#444]">Test Plan</T>
    <div className="ml-[19px] flex h-full w-[77px] shrink-0 items-center justify-center border-b-2 border-[#217346] bg-white font-bold text-[#217346]"><T className="w-[53px]">SO06-SD</T></div>
    <S className="ml-[33px] h-[17px] w-[17px]" vb="0 0 17 17"><circle cx="8.500" cy="8.500" r="7.500" stroke="#777" strokeWidth="1.200" /><path d="M8.500 4.500v8M4.500 8.500h8" stroke="#666" strokeWidth="1.500" /></S>
  </div>
);

const ScrollBtn = ({ d }: { d: string }) => <div className="flex h-[15px] w-[15px] shrink-0 items-center justify-center border border-[#999] bg-white"><S className="h-[8px] w-[8px]" vb="0 0 8 8"><path d={d} fill="#222" /></S></div>;

function ExcelWindow() {
  return (
    <div className="flex h-[860px] w-[1600px] flex-col bg-[#e6e6e6] font-['Noto_Sans',sans-serif] text-[#333]">
      {/* title bar */}
      <div className="flex h-[34px] shrink-0 items-center bg-[#217346] text-[12px] leading-[16px] text-[#a5d2b8]">
        <T className="ml-[21px] w-[50px]">AutoSave</T>
        <div className="ml-[7px] flex h-[16px] w-[38px] shrink-0 items-center rounded-full border border-white pl-[3px] text-[10.5px] text-white"><div className="h-[8px] w-[8px] rounded-full bg-white" /><T className="ml-[7px] w-[14px]">Off</T></div>
        <S className="ml-[13px] h-4 w-4"><path d="M1 1h22v22H4l-3-3zM6 1v8h12V1M7 23v-8h10v8" stroke="#a5d2b8" strokeWidth="1.600" /></S>
        <S className="ml-[14px] h-4 w-4"><path d="M2 1v9h9M2 10C8-1 28 6 10 23" stroke="#5a9a77" strokeWidth="1.600" /></S>
        <Chev c="#5a9a77" className="ml-[7px] h-1 w-[6px]" />
        <S className="ml-[9px] h-4 w-4"><path d="M22 1v9h-9M22 10C16-1-4 6 14 23" stroke="#5a9a77" strokeWidth="1.600" /></S>
        <Chev c="#5a9a77" className="ml-[7px] h-1 w-[6px]" />
        <S className="ml-[16px] h-[6px] w-[7px]" vb="0 0 7 7"><path d="M0 .5h7M1 3l2.500 3L6 3z" stroke="#a5d2b8" /></S>
        <T className="ml-[62px] w-[246px]">ZTST_SD_Roles_for_SG31_STG010_07112023.xlsx</T>
        <Chev c="#a5d2b8" className="ml-[5px] h-[6px] w-[10px]" />
        <div className="ml-[54px] flex h-[22px] w-[366px] shrink-0 items-center bg-[#a0cdb5] pl-[19px] text-[#217346]"><Mag c="#217346" w={3} className="h-[14px] w-[14px]" /><T className="ml-[16px] w-[35px]">Search</T></div>
        <T className="ml-[317px] w-[63px]">Britney Muk</T>
        <div className="ml-[9px] flex h-6 w-6 shrink-0 items-center justify-center rounded-full bg-[#a4262c] text-[11px] text-white"><T className="w-[16px]">BM</T></div>
        <S className="ml-[28px] h-[11px] w-[14px]" vb="0 0 14 11"><path d="M.5.500h13v10H.5zM.5 2.500h13M7 10V5M5 6.500L7 4.500l2 2" stroke="#a5d2b8" /></S>
        <div className="ml-[34px] h-px w-[11px] bg-[#a5d2b8]" />
        <S className="ml-[35px] h-[11px] w-[11px]" vb="0 0 11 11"><path d="M.5 2.500h8v8h-8zM2.500 2V.500h8v8H9" stroke="#a5d2b8" /></S>
        <S className="ml-[36px] h-[11px] w-[11px]" vb="0 0 11 11"><path d="M.5.500l10 10M10.500.500l-10 10" stroke="#a5d2b8" /></S>
      </div>
      {/* ribbon tabs */}
      <div className="flex h-[33px] shrink-0 items-center bg-[#f3f2f1] text-[13.5px] leading-[18px] text-[#444]">
        {tabs.map(([t, c]) => <T key={t} className={"-mt-[2px] " + c}>{t}</T>)}
        <div className="ml-[28px] flex h-[28px] w-[73px] shrink-0 items-center border-b-[3px] border-[#217346]"><T className="mt-[1px] w-[72px] font-medium text-[#333]">Custom Tab</T></div>
        <div className="ml-[480px] flex h-[24px] w-[100px] shrink-0 items-center rounded-[4px] border border-[#8a8a8a] bg-white pl-[7px] font-semibold text-[#217346]"><S className="h-[12px] w-[12px]" vb="0 0 12 12"><path d="M1 1h10v7H5L3 11V8H1z" stroke="#217346" strokeWidth="1.200" /></S><T className="ml-[4px] w-[66px]">Comments</T></div>
        <div className="ml-[8px] flex h-[24px] w-[81px] shrink-0 items-center rounded-[4px] border border-[#8a8a8a] bg-white pl-[7px] font-semibold text-[#217346]"><S className="h-[12px] w-[12px]" vb="0 0 12 12"><path d="M4 3H1v8h9V8M3 8c0-4 3-5 5-5V1l3 3-3 3V5" stroke="#217346" /></S><T className="ml-[4px] w-[34px]">Share</T><Chev c="#217346" className="ml-[11px] h-[4px] w-[7px]" /></div>
      </div>
      {/* ribbon */}
      <div className="flex h-[93px] shrink-0 bg-[#f3f2f1] pl-[6px]">
        <Group className="w-[72px] pl-[5px] pr-[12px]" label="SAP HANA" labelW="w-[52px]"><div className="flex"><S className="h-4 w-[17px]"><path d="M1 1h21v22H1zM1 8h21M1 15h21M9 1v22M16 1v22" fill="#fff" stroke="#555" strokeWidth="1.400" /><path d="M1 1h21v5H1z" fill="#999" /><path d="M10 22l8-10M19 8l1 4 4 1-4 2-1 4-2-4-4-1 4-2z" stroke="#2f8bd5" strokeWidth="2.200" fill="#fff" /></S><T className="ml-[2px] w-[32px]">Query</T></div></Group>
        <Group className="w-[123px] pl-[10px] pr-[13px]" label="SAP Docs" labelW="w-[47px]"><div className="flex"><Eraser /><T className="ml-[4px] w-[57px]">Delete Pics</T></div><div className="flex"><Eraser /><T className="ml-[4px] w-[79px]">Delete Content</T></div></Group>
        <Group className="w-[102px] pl-[11px] pr-[9px]" label="SAP Record" labelW="w-[58px]"><div className="flex"><S className="h-[15px] w-4"><path d="M1 2h22v21H1z" fill="#fff" stroke="#444" strokeWidth="1.600" /><circle cx="12" cy="13" r="5" stroke="#444" strokeWidth="1.600" /><path d="M3 6h4v3H3z" fill="#444" /></S><T className="ml-[3px] w-[59px]">Screenshot</T></div></Group>
        <Group className="w-[94px] pl-[11px] pr-[9px]" label="K2 Tech Docs" labelW="w-[66px]"><div className="flex"><Doc c="#107c41" d="M4 8l6 9M10 8l-6 9" /><T className="ml-[3px] w-[45px]">WBnWD</T></div><div className="flex"><Doc c="#185abd" d="M2 8l2.500 9L7 9l2.500 8L12 8" /><T className="ml-[3px] w-[49px]">WBtoWD</T></div></Group>
        <S className="ml-auto mr-[8px] mt-[84px] h-[5px] w-[10px]" vb="0 0 10 5"><path d="M.5 4.500L5 .800l4.500 3.700" stroke="#333" strokeWidth="1.200" /></S>
      </div>
      <div className="h-[8px] shrink-0 bg-gradient-to-b from-[#cfcfcf] to-[#e6e6e6]" />
      {/* formula bar */}
      <div className="mt-[3px] flex h-[26px] shrink-0 items-center text-[12px]">
        <div className="ml-[5px] flex h-full w-[102px] shrink-0 items-center justify-between border border-[#c6c6c6] bg-white px-[6px]"><T className="w-[22px]">B20</T><S className="h-[4px] w-[8px]" vb="0 0 8 4"><path d="M0 0h8L4 4z" fill="#666" /></S></div>
        <div className="ml-[14px] flex w-[2px] shrink-0 flex-col gap-[3px]"><i className="h-[2px] bg-[#aaa]" /><i className="h-[2px] bg-[#aaa]" /><i className="h-[2px] bg-[#aaa]" /></div>
        <div className="ml-[14px] flex h-full w-[111px] shrink-0 items-center border border-[#c6c6c6] bg-white pl-[13px]">
          <S className="h-[10px] w-[11px]" vb="0 0 11 10"><path d="M1 0l9 10M10 0L1 10" stroke="#b5b5b5" strokeWidth="1.400" /></S>
          <S className="ml-[25px] h-[10px] w-[13px]" vb="0 0 13 10"><path d="M1 5l4 4 7-9" stroke="#b5b5b5" strokeWidth="2" /></S>
          <T className="ml-[23px] w-[12px] font-['Liberation_Serif',serif] text-[15px] italic text-[#444]">f<span className="text-[11px]">x</span></T>
        </div>
        <div className="ml-[3px] flex h-full w-[1345px] shrink-0 items-center justify-end border border-[#c6c6c6] bg-white pr-[4px]"><Chev c="#666" className="h-[5px] w-[8px]" /></div>
      </div>
      {/* grid */}
      <div className="mt-[9px] flex h-[604px] shrink-0 font-['Liberation_Sans',sans-serif] text-black">
        <div className="relative flex w-[1580px] flex-col overflow-hidden border-b border-r border-[#8f8f8f] bg-white">
          <div className="flex h-[14px] shrink-0 border-b border-[#9b9b9b] bg-[#e6e6e6] text-[11px] leading-[14px]">
            <div className="flex w-[28px] shrink-0 items-end justify-end p-[3px]"><div className="h-[6px] w-[6px] bg-[#b5b5b5] [clip-path:polygon(100%_0,100%_100%,0_100%)]" /></div>
            {letters.map((l, i) => <div key={l} className={"shrink-0 border-r border-[#b5b5b5] text-center " + colW[i] + (l === "B" ? " border-b-2 border-b-[#217346] bg-[#d2d2d2] text-[#217346]" : "")}>{l}</div>)}
          </div>
          <MetaRow n={12} h="h-[12px]" label="Approved  By (Full Name)" lw="w-[130px]" value="Jenny Lee" vw="w-[34px] -mt-[2px]" clip />
          <MetaRow n={13} h="h-[15px]" label="Date Approved" lw="w-[76px]" value="11/7/2023" vw="w-[36px]" />
          <MetaRow n={14} h="h-[15px]" label="Pre-Requisites" lw="w-[76px]" />
          <MetaRow n={15} h="h-[15px]" label="Overall results" lw="w-[74px]" value="PASS" vw="w-[25px] -mt-[3px]" pass />
          <div className="flex h-[96px] shrink-0">
            <RowNo n={16} />
            {heads.map((lines, i) => (
              <div key={i} className={"flex shrink-0 flex-col items-center justify-center overflow-hidden border-b border-r-2 border-black bg-[#99ccff] text-[11.5px] font-bold leading-[12px] " + (i > 3 ? "border-t-2 " : i < 2 ? "border-t " : "") + (i === 8 ? "pb-[9px] " : i === 5 ? "pb-0 " : "") + colW[i]}>
                {lines.map(([t, w], k) => t ? <T key={k} className={w}>{t}</T> : <div key={k} className="h-[12px] shrink-0" />)}
              </div>
            ))}
            <Blank from={12} />
          </div>
          <div className="flex h-[60px] shrink-0 text-[10.5px] leading-[12px]">
            <RowNo n={17} />
            <div className={"flex shrink-0 items-center justify-center border-b border-r border-black " + colW[0]}>1</div>
            <div className={"flex shrink-0 justify-center border-b border-r border-black " + colW[1]}><T className="w-[34px]">Security</T></div>
            <div className={"shrink-0 border-b border-r border-black pl-[3px] " + colW[2]}><T className="w-[20px]">SE16</T></div>
            <div className={"shrink-0 border-b border-r border-black pl-[3px] " + colW[3]}><T className="w-[93px]">Enter Table AGR_1252</T><T className="w-[91px]">for All ZD:SD_*_SO06</T></div>
            <div className={"shrink-0 border-b border-r border-black pl-[3px] " + colW[4]}><T className="w-[130px]">Should be able to show the New</T><T className="w-[89px]">Structure as expected</T></div>
            {[5, 6, 7, 8, 9].map(i => <div key={i} className={"shrink-0 border-b border-r border-black " + colW[i]} />)}
            <div className={"flex shrink-0 items-center justify-center border-b border-r border-black text-[9px] font-bold " + colW[10]}><T className="w-[41px]">11/7/2023</T></div>
            <div className={"shrink-0 border-b border-r border-black " + colW[11]} />
            <Blank from={12} />
          </div>
          {Array.from({ length: 27 }, (_, i) => <div key={i} className="flex h-[14px] shrink-0"><RowNo n={18 + i} sel={i === 2} /><Blank /></div>)}
          {/* cell cursor */}
          <div className="absolute left-[71px] top-[253px] h-[17px] w-[157px] border-2 border-[#217346]"><div className="absolute -bottom-[3px] -right-[3px] h-[5px] w-[5px] border-l border-t border-white bg-[#217346]" /></div>
          {/* macro progress dialog */}
          <div className="absolute left-[595px] top-[151px] flex h-[138px] w-[410px] flex-col border border-[#6d6d6d] bg-white text-[#111] shadow-[0_4px_14px_rgba(0,0,0,0.4)]">
            <div className="flex h-[30px] shrink-0 items-center justify-between pl-[8px] pr-[9px] font-['Noto_Sans',sans-serif] text-[12px]"><T className="w-[52px]">Loading...</T><S className="-mt-[2px] h-[11px] w-[11px]" vb="0 0 11 11"><path d="M.5.500l10 10M10.500.500l-10 10" stroke="#222" strokeWidth="1.200" /></S></div>
            <div className="flex h-[40px] shrink-0 rounded-[5px] bg-[#eaf2fe] pl-[24px] pt-[8px] text-[14px] leading-[16px]"><T className="w-[77px]">SAP Record</T></div>
            <div className="flex flex-1 flex-col gap-[10px] pl-[24px] pt-[9px] text-[12px] leading-[14px]"><T className="w-[201px]">Status: Working on: lngRow = 4 to 43</T><T className="w-[87px]">Processing: 4%</T></div>
            <div className="h-[3px] w-4 bg-gradient-to-r from-[#6a4bd0] via-[#3fa7d8] to-[#e8b820]" />
          </div>
        </div>
        <div className="ml-[2px] mt-[3px] flex h-[602px] w-[15px] flex-col bg-[#f1f1f1]"><ScrollBtn d="M4 1l4 5H0z" /><div className="mt-[5px] h-[15px] border border-[#999] bg-white" /><div className="flex-1" /><ScrollBtn d="M4 7l4-5H0z" /></div>
      </div>
      {/* sheet tabs */}
      <div className="flex h-[49px] shrink-0 justify-between">
        <div className="flex flex-col gap-[2px]"><SheetTabs h="h-[25px]" /><SheetTabs h="h-[19px]" /></div>
        <div className="mr-[21px] mt-[6px] flex h-[15px] items-center"><div className="mr-[15px] flex w-[2px] flex-col gap-[2px]"><i className="h-[2px] bg-[#b5b5b5]" /><i className="h-[2px] bg-[#b5b5b5]" /><i className="h-[2px] bg-[#b5b5b5]" /></div><ScrollBtn d="M1 4l5-4v8z" /><div className="h-[15px] w-[429px] border border-[#999] bg-white" /><div className="h-full w-[14px] bg-[#f1f1f1]" /><ScrollBtn d="M7 4L2 0v8z" /></div>
      </div>
    </div>
  );
}

const rightSize = ["h-[18px] w-[24px]", "h-[22px] w-[24px]", "h-[23px] w-[24px]", "h-[24px] w-[26px]", "h-[24px] w-[24px]", "h-[16px] w-[24px]", "h-[12px] w-[24px]", "h-[22px] w-[24px]"];
const Cloud = ({ className, c }: IP & { c: string }) => <S vb="0 0 24 16" className={className}><path d="M5 16a5 5 0 010-10C7-1 16-1 18 6c8 0 8 10 1 10z" fill={c} /></S>;

function RightTaskbar() {
  return (
    <div className="flex h-[40px] w-[1600px] items-center bg-gradient-to-r from-[#27363d] via-[#2b3032] via-70% to-[#1e2f37] font-['Noto_Sans',sans-serif] text-[13.5px] leading-[18px] text-white">
      <Win className="ml-[15px] h-[17px] w-[17px]" />
      <div className="ml-[16px] flex h-full w-[288px] shrink-0 items-center border border-[#b5b5b5] bg-[#f2f2f2] pl-[11px] text-[15px] text-[#333]">
        <Mag c="#222" w={2.500} className="h-[17px] w-[17px]" /><T className="ml-[11px] w-[128px]">Type here to search</T>
        <div className="ml-[44px] flex h-[33px] w-[72px] items-center justify-center rounded-[6px] bg-[#e0e0e0]"><S vb="0 0 30 25" className="h-[25px] w-[30px]"><path d="M10 5V1h10v4" stroke="#444" strokeWidth="2.500" /><rect y="4" width="30" height="21" rx="1.500" fill="#b9690a" /><path d="M0 4h30v11H0z" fill="#f29a12" /><path d="M13 12h5v5h-5z" fill="#ffe13b" /></S></div>
      </div>
      <TaskView className="ml-[15px] h-[15px] w-[19px]" />
      <div className="ml-[16px] flex h-full">
        {icons.map((Ic, i) => (
          <div key={i} className={"relative flex h-full w-[49px] flex-col items-center " + (i === 7 ? "border-r-4 border-[#3f4a50] bg-[#535e64]" : "")}>
            <div className="flex flex-1 items-center justify-center"><Ic className={rightSize[i]} /></div>
            {i !== 5 && <div className={"absolute bottom-0 h-[2px] bg-[#76b9ed] " + (i === 7 ? "left-0 w-[49px]" : "w-[40px]")} />}
            {i === 2 && <div className="absolute left-[27px] top-[21px] flex h-[14px] w-[14px] items-center justify-center rounded-full bg-[#c4162f] text-[10px] leading-none">1</div>}
          </div>
        ))}
      </div>
      <div className="relative ml-[317px] flex h-[24px] w-[26px] shrink-0 items-end"><Cloud c="#b8d2fb" className="h-[16px] w-[25px]" /><div className="absolute right-0 top-0 flex h-[13px] w-[13px] items-center justify-center rounded-full bg-[#c42b1c] text-[9px] leading-none">1</div></div>
      <T className="ml-[8px] w-[29px]">30°C</T><T className="ml-[9px] w-[86px]">Mostly cloudy</T>
      <S vb="0 0 12 7" className="ml-[25px] h-[7px] w-[12px]"><path d="M.5 6.500L6 .800l5.500 5.700" stroke="#fff" strokeWidth="1.300" /></S>
      <div className="relative ml-[10px] shrink-0"><Cloud c="#1b7fd8" className="h-[10px] w-4" /><div className="absolute -bottom-[3px] right-0 h-[8px] w-[8px] rounded-full border border-[#1b7fd8] bg-white" /></div>
      <Cloud c="#d8d8d8" className="ml-[8px] h-[10px] w-4" />
      <S vb="0 0 17 12" className="ml-[8px] h-[12px] w-[17px]"><path d="M5 3h10v8H3V7M15 5.500h1.500v3H15M1 2h4v3H1zM3 5v3M2 0v2M4 0v2" stroke="#fff" /><path d="M7 5h5v4H7z" fill="#fff" /></S>
      <S vb="0 0 14 13" className="ml-[9px] h-[13px] w-[14px]"><path d="M1 12C1 5 6 1 13 1M4 12c0-5 4-8 9-8M7 12c0-3 3-5 6-5M10 12c0-1 1-2 3-2" stroke="#ddd" strokeWidth="1.200" /></S>
      <S vb="0 0 15 12" className="ml-[8px] h-[12px] w-[15px]"><path d="M1 4h2l4-3v10L3 8H1zM10 4l4 4M14 4l-4 4" stroke="#fff" strokeWidth="1.100" /></S>
      <Pen className="ml-[12px] h-[15px] w-[17px]" />
      <T className="ml-[13px] w-[24px] text-[12px]">ENG</T>
      <div className="ml-[12px] flex shrink-0 flex-col items-center text-[12px]"><T className="w-[49px]">10:04 AM</T><T className="w-[52px]">11/7/2023</T></div>
      <div className="relative ml-[17px] h-[24px] w-[25px] shrink-0"><S vb="0 0 16 16" className="h-[16px] w-[16px]"><path d="M0 0h16v13H6l-3 3v-3H0z" fill="#fff" /><path d="M3 4h10M3 7h10M3 10h7" stroke="#333" /></S><div className="absolute bottom-0 right-0 flex h-[16px] w-[18px] items-center justify-center rounded-full border border-[#999] bg-[#26333a] text-[10.5px] font-semibold leading-none">17</div></div>
      <div className="ml-[11px] h-full w-px bg-[#6b767c]" />
    </div>
  );
}

export default function App() {
  return (
    <div className="flex h-[1080px] w-[3520px] overflow-hidden bg-black">
      <div className="flex w-[1920px] shrink-0 flex-col"><SapWindow /><LeftTaskbar /></div>
      <div className="flex w-[1600px] shrink-0 flex-col pt-[5px]"><ExcelWindow /><RightTaskbar /></div>
    </div>
  );
}
